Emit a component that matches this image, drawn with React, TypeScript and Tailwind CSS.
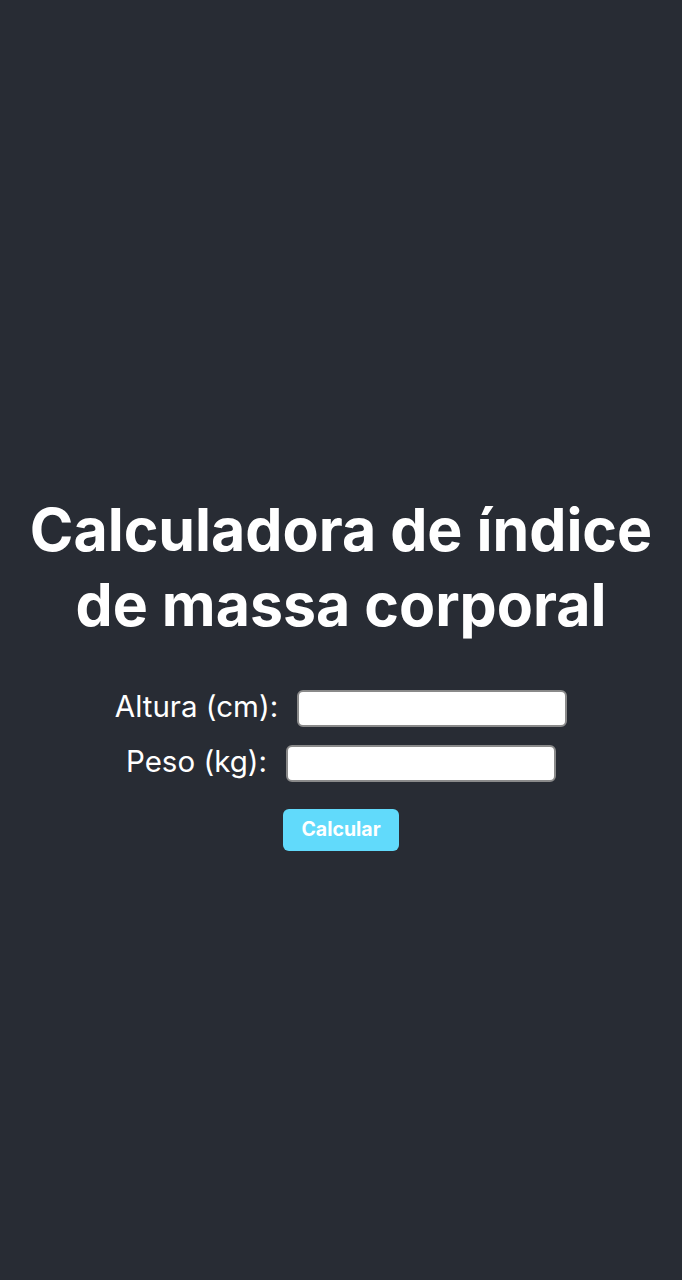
export default function App() {
  return (
    <div className="min-h-screen bg-[#282c34] flex flex-col items-center justify-center text-white font-['Inter',sans-serif]">
      <h1 className="text-[59px] leading-[75px] font-bold text-center px-4 mt-[62px] mb-[48px]">
        Calculadora de índice de massa corporal
      </h1>
      <div className="flex flex-col items-center gap-[18px]">
        <div className="flex items-center gap-[19px]">
          <label className="text-[29.5px] leading-[37px] -mt-[3px]">Altura (cm):</label>
          <input className="w-[270px] h-[37px] bg-white rounded-[6px] border-2 border-[#8a8a8a]" />
        </div>
        <div className="flex items-center gap-[19px]">
          <label className="text-[29.5px] leading-[37px] -mt-[3px]">Peso (kg):</label>
          <input className="w-[270px] h-[37px] bg-white rounded-[6px] border-2 border-[#8a8a8a]" />
        </div>
      </div>
      <button className="mt-[27px] w-[116px] h-[42px] bg-[#61dafb] rounded-[6px] text-white font-bold text-[19.5px]">
        Calcular
      </button>
    </div>
  );
}
